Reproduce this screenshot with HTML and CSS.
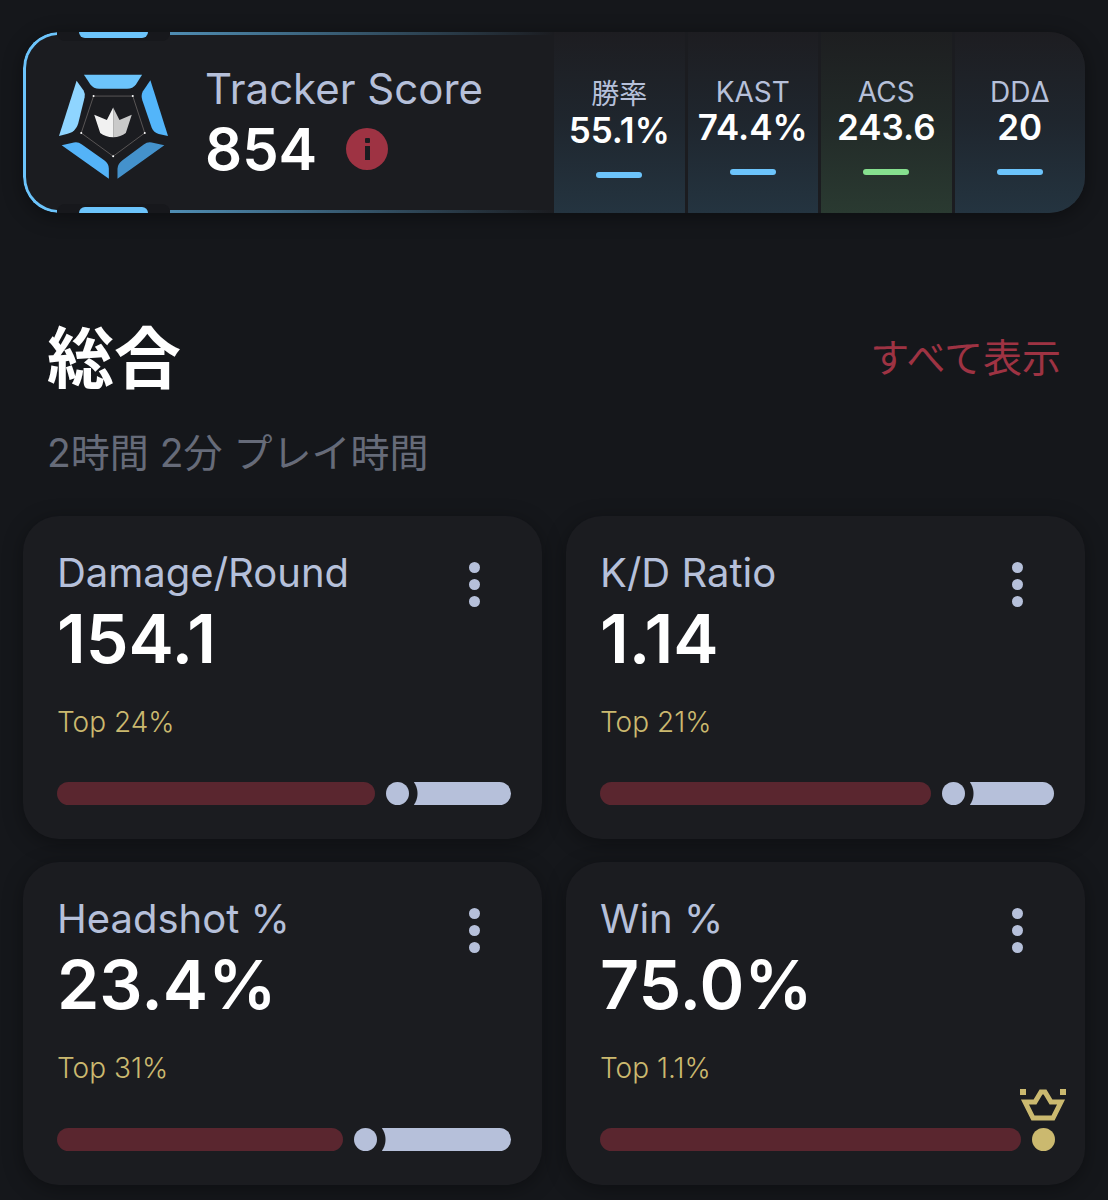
FILE: index.html
```html
<!DOCTYPE html>
<html lang="ja">
<head>
 <meta charset="UTF-8">
 <meta name="viewport" content="width=device-width, initial-scale=1.0">
 <title>Tracker Score</title>
 <link rel="stylesheet" href="styles.css">
</head>
<body>

 <main class="page">

 <!-- Score banner -->
 <section class="score-card">
 <div class="score-main">
 <span class="frame-side"></span>
 <span class="frame-notch top"></span>
 <span class="frame-notch bottom"></span>
 <span class="frame-line top"></span>
 <span class="frame-line bottom"></span>

 <svg class="rank-icon" viewBox="54 42 334 318" aria-hidden="true">
 <path fill="#6cc4fb" d="M132 44H307L289 72Q279 86 262 86H178Q161 86 151 72Z"/>
 <path fill="#8fd5ff" d="M110 62L131 91Q136 99 134 112L115 190Q110 207 97 216Q89 221 57 228Z"/>
 <path fill="#53b5fa" d="M332 60L385 228L357 222Q342 217 336 203L308 121Q303 105 309 94Z"/>
 <path fill="#54b3f8" d="M65 256L102 248Q114 245 126 254L193 301Q207 311 207 326V357Z"/>
 <path fill="#4492cc" d="M374 256L336 248Q324 245 312 254L248 301Q233 312 233 327V357Z"/>
 <path fill="none" stroke="#77716f" stroke-width="2" d="M161 108H279L315 219L220 289L124 219Z"/>
 <g fill="#fff"><circle cx="161" cy="108" r="3"/><circle cx="279" cy="108" r="3"/><circle cx="315" cy="219" r="3"/><circle cx="220" cy="289" r="3"/><circle cx="124" cy="219" r="3"/></g>
 <path fill="#f1f1f1" d="M220 142L201 180L163 164L181 219Q196 231 220 232Z"/>
 <path fill="#c9c9c9" d="M220 142L239 180L276 164L258 219Q243 231 220 232Z"/>
 </svg>

 <div class="score-text">
 <h1>Tracker Score</h1>
 <div class="score-row">
 <span class="score-value">854</span>
 <button class="info-btn" type="button" aria-label="Info">
 <svg viewBox="0 0 42 42"><rect x="19" y="10" width="5" height="5" rx="1"/><path d="M19 18H24V32H19Z"/></svg>
 </button>
 </div>
 </div>
 </div>

 <div class="score-stats">
 <div class="stat">
 <span class="stat-label">勝率</span>
 <span class="stat-value">55.1%</span>
 <span class="stat-mark"></span>
 </div>
 <div class="stat">
 <span class="stat-label">KAST</span>
 <span class="stat-value">74.4%</span>
 <span class="stat-mark"></span>
 </div>
 <div class="stat good">
 <span class="stat-label">ACS</span>
 <span class="stat-value">243.6</span>
 <span class="stat-mark"></span>
 </div>
 <div class="stat">
 <span class="stat-label">DDΔ</span>
 <span class="stat-value">20</span>
 <span class="stat-mark"></span>
 </div>
 </div>
 </section>

 <!-- Overview -->
 <header class="section-head">
 <h2>総合</h2>
 <a href="#all">すべて表示</a>
 </header>
 <p class="playtime">2時間 2分 プレイ時間</p>

 <section class="cards" id="all">
 <article class="card">
 <div class="card-head">
 <h3>Damage/Round</h3>
 <button class="menu-btn" type="button" aria-label="Menu"><i></i><i></i><i></i></button>
 </div>
 <div class="card-value">154.1</div>
 <div class="card-rank">Top 24%</div>
 <div class="bar">
 <span class="bar-fill" style="width: 70%"></span>
 <span class="bar-dot"></span>
 <span class="bar-rest"></span>
 </div>
 </article>

 <article class="card">
 <div class="card-head">
 <h3>K/D Ratio</h3>
 <button class="menu-btn" type="button" aria-label="Menu"><i></i><i></i><i></i></button>
 </div>
 <div class="card-value">1.14</div>
 <div class="card-rank">Top 21%</div>
 <div class="bar">
 <span class="bar-fill" style="width: 73%"></span>
 <span class="bar-dot"></span>
 <span class="bar-rest"></span>
 </div>
 </article>

 <article class="card">
 <div class="card-head">
 <h3>Headshot %</h3>
 <button class="menu-btn" type="button" aria-label="Menu"><i></i><i></i><i></i></button>
 </div>
 <div class="card-value">23.4%</div>
 <div class="card-rank">Top 31%</div>
 <div class="bar">
 <span class="bar-fill" style="width: 63%"></span>
 <span class="bar-dot"></span>
 <span class="bar-rest"></span>
 </div>
 </article>

 <article class="card">
 <div class="card-head">
 <h3>Win %</h3>
 <button class="menu-btn" type="button" aria-label="Menu"><i></i><i></i><i></i></button>
 </div>
 <div class="card-value">75.0%</div>
 <div class="card-rank">Top 1.1%</div>
 <div class="bar">
 <span class="bar-fill" style="width: 92.7%"></span>
 <span class="bar-dot gold">
 <svg class="crown" viewBox="0 0 46 32" aria-hidden="true">
 <path fill="#cbb96f" d="M0 0H6V6H0ZM40 0H46V6H40Z"/>
 <path fill="none" stroke="#cbb96f" stroke-width="5" d="M5 13H15L21 3H25L31 13H41L33 29H13Z"/>
 </svg>
 </span>
 </div>
 </article>
 </section>

 </main>

</body>
</html>
```
FILE: styles.css
```css
* {
box-sizing: border-box;
}

body {
margin: 0;
background: #15171b;
color: #fff;
font-family: Inter, "Noto Sans CJK JP", sans-serif;
font-optical-sizing: none;
}

h1, h2, h3, p {
margin: 0;
font-weight: 400;
}

button {
border: none;
padding: 0;
background: none;
cursor: pointer;
}

.page {
padding: 32px 23px 15px;
}

/* Score banner */
.score-card {
display: grid;
grid-template-columns: 1fr 1fr;
height: 181px;
border-radius: 36px;
background: #1b1c20;
box-shadow: 0 4px 20px rgba(0, 0, 0, 0.4);
overflow: hidden;
}

.score-main {
position: relative;
display: flex;
align-items: center;
padding: 0 35px 4px;
gap: 36px;
}

/* Blue frame round the left half */
.frame-side {
position: absolute;
top: 0;
bottom: 0;
left: 0;
width: 60px;
border: 3px solid #6cc4fb;
border-right: none;
border-radius: 36px 0 0 36px;
clip-path: inset(0 26px 0 0);
}

.frame-notch {
position: absolute;
left: 34px;
width: 113px;
height: 9px;
background: #17181c;
}

.frame-notch::after {
content: "";
position: absolute;
left: 22px;
width: 69px;
height: 6px;
background: #6cc4fb;
}

.frame-line {
position: absolute;
left: 147px;
right: 0;
height: 3px;
background: linear-gradient(90deg, #4f8db3, rgba(79, 141, 179, 0));
}

.top {
top: 0;
}

.bottom {
bottom: 0;
}

.frame-notch.top {
border-radius: 0 0 8px 8px;
}

.frame-notch.bottom {
border-radius: 8px 8px 0 0;
}

.frame-notch.top::after {
top: 0;
border-radius: 0 0 6px 6px;
}

.frame-notch.bottom::after {
bottom: 0;
border-radius: 6px 6px 0 0;
}

.rank-icon {
width: 111px;
height: 106px;
margin-top: 12px;
}

.score-text h1 {
font-size: 42px;
line-height: 56px;
color: #b6c0da;
}

.score-row {
display: flex;
align-items: center;
gap: 29px;
}

.score-value {
font-size: 58px;
line-height: 64px;
font-weight: 600;
}

.info-btn {
width: 42px;
height: 42px;
border-radius: 50%;
background: #9e3343;
}

.info-btn svg {
display: block;
fill: #1b1c20;
}

.score-stats {
display: grid;
grid-template-columns: repeat(4, 1fr);
gap: 3px;
}

.stat {
display: flex;
flex-direction: column;
align-items: center;
justify-content: center;
padding-top: 4px;
background: linear-gradient(#1d1d21, #1f262e 50%, #243440);
}

.stat.good {
background: linear-gradient(#1d1e20, #222a28 50%, #2a3a31);
}

.stat-label {
font-size: 28px;
color: #b6c0da;
}

.stat-value {
font-size: 35px;
line-height: 36px;
font-weight: 600;
}

.stat-mark {
width: 46px;
height: 6px;
margin-top: 24px;
border-radius: 3px;
background: #6cc4fb;
}

.good .stat-mark {
background: #86e08f;
}

/* Section heading */
.section-head {
display: flex;
align-items: center;
justify-content: space-between;
margin-top: 98px;
padding: 0 24px;
}

.section-head h2 {
font-size: 67px;
line-height: 96px;
font-weight: 700;
}

.section-head a {
margin-bottom: 8px;
font-size: 39px;
color: #9e3343;
text-decoration: none;
}

.playtime {
padding: 0 24px;
margin-top: 18px;
font-size: 39px;
line-height: 56px;
color: #666b79;
}

/* Stat cards */
.cards {
display: grid;
grid-template-columns: 1fr 1fr;
gap: 23px 24px;
margin-top: 35px;
}

.card {
padding: 34px;
padding-right: 31px;
border-radius: 36px;
background: #1b1c20;
box-shadow: 0 4px 20px rgba(0, 0, 0, 0.35);
}

.card-head {
display: flex;
justify-content: space-between;
height: 48px;
}

.card-head h3 {
font-size: 40px;
line-height: 46px;
color: #b6c0da;
}

.menu-btn {
display: flex;
flex-direction: column;
align-items: center;
gap: 6px;
width: 44px;
height: 48px;
margin-right: 15px;
padding-top: 12px;
}

.menu-btn i {
width: 11px;
height: 11px;
flex-shrink: 0;
border-radius: 50%;
background: #b6c0da;
}

.card-value {
font-size: 68px;
line-height: 80px;
font-weight: 600;
}

.card-rank {
margin-top: 24px;
font-size: 28px;
line-height: 40px;
font-weight: 300;
color: #cbb96f;
}

.bar {
display: flex;
height: 23px;
margin-top: 40px;
}

.bar-fill {
flex-shrink: 0;
border-radius: 12px;
background: #5a262f;
}

.bar-dot {
position: relative;
flex-shrink: 0;
width: 23px;
height: 23px;
margin-left: 11px;
border-radius: 50%;
background: #b6c0da;
}

.bar-dot.gold {
background: #cbb96f;
}

.bar-rest {
flex: 1;
margin-left: 4px;
border-radius: 0 12px 12px 0;
background: radial-gradient(circle at -15px 50%, transparent 19px, #b6c0da 20px);
}

.crown {
position: absolute;
left: 50%;
bottom: 30px;
width: 46px;
height: 32px;
margin-left: -23px;
}
```
